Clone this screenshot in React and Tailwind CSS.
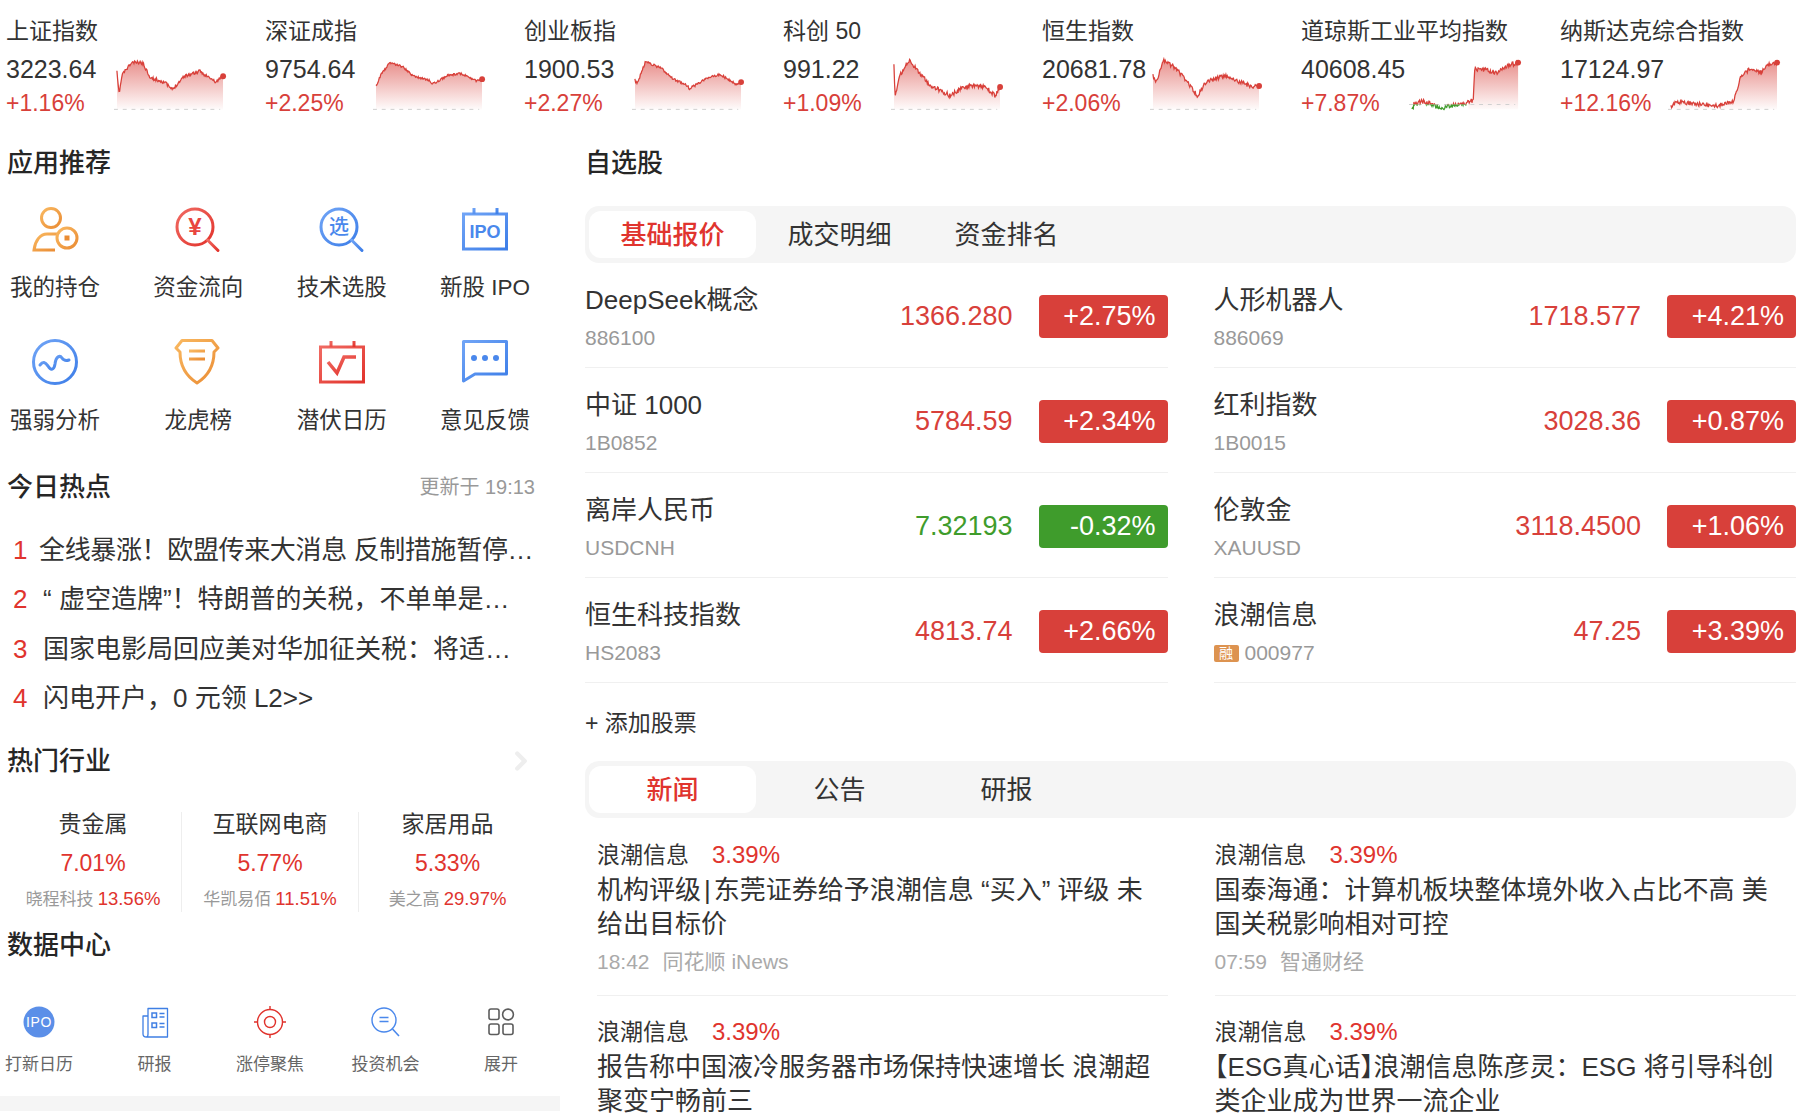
import React from 'react';
import { ChevronRight } from 'lucide-react';

const RED = '#d8403a';

// seeded noise so the sparklines come out the same on every render
const noise = (seed) => {
  let s = seed;
  return () => {
    s = (s * 16807) % 2147483647;
    return s / 2147483647 - 0.5;
  };
};

const buildLine = (keys, w, seed, amp) => {
  const rnd = noise(seed);
  const pts = [];
  for (let x = 0; x <= w; x += 0.7) {
    const pct = (x / w) * 100;
    let i = 0;
    while (i < keys.length - 2 && keys[i + 1][0] < pct) i++;
    const [x0, y0] = keys[i];
    const [x1, y1] = keys[i + 1];
    const y = y0 + ((y1 - y0) * (pct - x0)) / (x1 - x0);
    pts.push([x, y + rnd() * amp * 2]);
  }
  const [lx, ly] = keys[keys.length - 1];
  pts.push([(lx / 100) * w, ly]);
  return pts;
};

const Spark = ({ id, keys, seed, w = 109, base = 52, fillFrom = 0, cross, amp = 1.7 }) => {
  const pts = buildLine(keys, w, seed, amp);
  const d = pts.map((p, i) => `${i ? 'L' : 'M'}${p[0].toFixed(1)} ${p[1].toFixed(1)}`).join(' ');
  const last = pts[pts.length - 1];
  const area = `${d} L${last[0]} 52 L0 52 Z`;
  return (
    <svg width={w + 4} height="56" viewBox={`-3 0 ${w + 7} 56`} className="block overflow-visible">
      <defs>
        <linearGradient id={`fill-${id}`} x1="0" y1="0" x2="0" y2="1">
          <stop offset="0" stopColor={RED} stopOpacity="0.58" />
          <stop offset="1" stopColor={RED} stopOpacity="0.02" />
        </linearGradient>
        <clipPath id={`area-${id}`}>
          <rect x={fillFrom} y="0" width={w} height="56" />
        </clipPath>
        <clipPath id={`above-${id}`}>
          <rect x="-3" y="-4" width={w + 10} height={(cross ?? 60) + 4} />
        </clipPath>
        <clipPath id={`below-${id}`}>
          <rect x="-3" y={cross ?? 60} width={w + 10} height="30" />
        </clipPath>
      </defs>
      <path d={area} fill={`url(#fill-${id})`} clipPath={`url(#area-${id})`} />
      <line x1="-3" y1={cross ?? base} x2={w - 3} y2={cross ?? base} stroke="#cfcfcf" strokeWidth="1" strokeDasharray="4 5" />
      <path d={d} fill="none" stroke={RED} strokeWidth="1.3" clipPath={`url(#above-${id})`} />
      {cross != null && <path d={d} fill="none" stroke="#3f9c2c" strokeWidth="1.3" clipPath={`url(#below-${id})`} />}
      <circle cx={last[0]} cy={last[1]} r="3" fill={RED} />
    </svg>
  );
};

const indices = [
  { name: '上证指数', value: '3223.64', pct: '+1.16%', seed: 11, keys: [[0, 14], [2, 36], [5, 16], [14, 4], [24, 4], [32, 20], [45, 24], [52, 32], [63, 18], [78, 13], [93, 24], [100, 18]] },
  { name: '深证成指', value: '9754.64', pct: '+2.25%', seed: 37, amp: 1.2, keys: [[0, 28], [5, 16], [13, 4], [25, 8], [35, 18], [50, 22], [53, 26], [68, 17], [80, 15], [95, 23], [100, 21]] },
  { name: '创业板指', value: '1900.53', pct: '+2.27%', seed: 53, amp: 1.2, keys: [[0, 22], [2, 26], [10, 3], [25, 10], [35, 20], [50, 28], [51, 31], [68, 20], [80, 16], [95, 26], [100, 24]] },
  { name: '科创 50', value: '991.22', pct: '+1.09%', seed: 71, amp: 2.4, keys: [[0, 8], [1, 38], [6, 16], [14, 2], [24, 14], [35, 28], [50, 36], [52, 38], [68, 28], [85, 28], [95, 38], [100, 29]] },
  { name: '恒生指数', value: '20681.78', pct: '+2.06%', seed: 97, amp: 2.2, keys: [[0, 18], [3, 24], [10, 2], [22, 10], [35, 28], [42, 38], [50, 24], [68, 17], [82, 24], [95, 29], [100, 28]] },
  { name: '道琼斯工业平均指数', value: '40608.45', pct: '+7.87%', cross: 47, fillFrom: 58, seed: 131, amp: 2.3, keys: [[0, 54], [2, 46], [10, 44], [20, 47], [28, 51], [42, 47], [50, 46], [57, 43], [58, 41], [59, 10], [70, 12], [80, 14], [90, 7], [100, 4]] },
  { name: '纳斯达克综合指数', value: '17124.97', pct: '+12.16%', seed: 173, amp: 2.2, keys: [[0, 50], [5, 44], [22, 46], [40, 49], [55, 45], [59, 43], [63, 30], [65, 18], [75, 10], [85, 14], [92, 6], [100, 4]] },
];

const Heading = ({ children }) => (
  <div className="h-[34px] flex items-center text-[26px] font-medium text-[#262626]">{children}</div>
);

const Grad = ({ id, from, to }) => (
  <defs>
    <linearGradient id={id} x1="0" y1="0" x2="1" y2="1">
      <stop offset="0" stopColor={from} />
      <stop offset="1" stopColor={to} />
    </linearGradient>
  </defs>
);

const ORANGE = ['#f9b860', '#ea8c34'];
const BLUE = ['#70a4f6', '#3d7ee8'];
const CRIMSON = ['#f06a62', '#e2332c'];

const Icon48 = ({ id, c, children }) => (
  <svg width="48" height="48" viewBox="0 0 48 48" fill="none" stroke={`url(#${id})`} strokeWidth="3">
    <Grad id={id} from={c[0]} to={c[1]} />
    {children}
  </svg>
);

const apps = [
  {
    label: '我的持仓',
    icon: (
      <Icon48 id="a1" c={ORANGE}>
        <circle cx="20" cy="13" r="9.5" />
        <path d="M26 29 H16 C9 29 4 36 3 45 H24" />
        <circle cx="36" cy="33" r="10" />
        <rect x="33.5" y="30.5" width="5" height="5" fill="#ea8c34" stroke="none" />
      </Icon48>
    ),
  },
  {
    label: '资金流向',
    icon: (
      <Icon48 id="a2" c={CRIMSON}>
        <circle cx="21" cy="22" r="18" />
        <path d="M33.5 35 L44 45.5" strokeLinecap="round" />
        <text x="21" y="30" textAnchor="middle" fontSize="24" fontWeight="700" fill="#e8463f" stroke="none">¥</text>
      </Icon48>
    ),
  },
  {
    label: '技术选股',
    icon: (
      <Icon48 id="a3" c={BLUE}>
        <circle cx="21" cy="22" r="18" />
        <path d="M33.5 35 L44 45.5" strokeLinecap="round" />
        <text x="21" y="29" textAnchor="middle" fontSize="20" fontWeight="500" fill="#4a88ec" stroke="none">选</text>
      </Icon48>
    ),
  },
  {
    label: '新股 IPO',
    icon: (
      <Icon48 id="a4" c={BLUE}>
        <rect x="2.5" y="9" width="43" height="35" />
        <path d="M13 3 V9 M36 3 V9" />
        <text x="24" y="32.5" textAnchor="middle" fontSize="18" fontWeight="800" fill="#4a88ec" stroke="none">IPO</text>
      </Icon48>
    ),
  },
  {
    label: '强弱分析',
    icon: (
      <Icon48 id="a5" c={BLUE}>
        <circle cx="24" cy="24" r="21.5" />
        <path d="M9 27 C12 23 14 24 17 28 C20 33 23 32 24 26 C25 18 29 17 31 20 C33 23 35 23 38 22" strokeLinecap="round" />
      </Icon48>
    ),
  },
  {
    label: '龙虎榜',
    icon: (
      <Icon48 id="a6" c={ORANGE}>
        <path d="M8 2.5 H38 L44 10 L40 14 C40 28 34 38 23 45 C12 38 6 28 6 14 L2 10 Z" strokeLinejoin="round" />
        <path d="M15 13 H31 M15 21 H31" />
      </Icon48>
    ),
  },
  {
    label: '潜伏日历',
    icon: (
      <Icon48 id="a7" c={CRIMSON}>
        <rect x="2.5" y="9" width="43" height="35" />
        <path d="M13 3 V9 M36 3 V9" />
        <path d="M10 24 L19 35 L26 19 H38" strokeWidth="3.5" />
      </Icon48>
    ),
  },
  {
    label: '意见反馈',
    icon: (
      <Icon48 id="a8" c={BLUE}>
        <path d="M2.5 3.5 H45.5 V36 H14 L2.5 43 Z" strokeLinejoin="round" />
        <circle cx="13" cy="20" r="3" fill="#4a88ec" stroke="none" />
        <circle cx="24" cy="20" r="3" fill="#4a88ec" stroke="none" />
        <circle cx="35" cy="20" r="3" fill="#4a88ec" stroke="none" />
      </Icon48>
    ),
  },
];

const hot = [
  { text: '全线暴涨！欧盟传来大消息 反制措施暂停…', cls: 'tracking-[-0.35px]' },
  { text: '“ 虚空造牌”！特朗普的关税，不单单是…', cls: 'pl-[4px]' },
  { text: '国家电影局回应美对华加征关税：将适…', cls: 'pl-[4px]' },
  { text: '闪电开户，0 元领 L2>>', cls: 'pl-[4px]' },
];

const sectors = [
  { name: '贵金属', pct: '7.01%', stock: '晓程科技', sub: '13.56%' },
  { name: '互联网电商', pct: '5.77%', stock: '华凯易佰', sub: '11.51%' },
  { name: '家居用品', pct: '5.33%', stock: '美之高', sub: '29.97%' },
];

const dataCenter = [
  {
    label: '打新日历',
    icon: (
      <svg width="36" height="36" viewBox="0 0 36 36">
        <circle cx="18" cy="18" r="15.5" fill="#5b8fe8" />
        <text x="18" y="23" textAnchor="middle" fontSize="14" fill="#fff" letterSpacing="0.6">IPO</text>
      </svg>
    ),
  },
  {
    label: '研报',
    icon: (
      <svg width="36" height="36" viewBox="0 0 36 36" fill="none" stroke="#3f7fe4" strokeWidth="1.3">
        <path d="M11 4.5 H30.5 V33 H9.5 C7.5 33 6 32 6 30 V12 H11 Z M11 12 V30 C11 32 10 33 9.5 33" strokeLinejoin="round" />
        <rect x="15" y="9" width="4.5" height="4.5" strokeWidth="1.5" />
        <rect x="15" y="19" width="4.5" height="4.5" strokeWidth="1.5" />
        <path d="M22.5 9.5 H27.5 M22.5 13 H27.5 M22.5 19.5 H27.5 M22.5 23 H27.5" />
      </svg>
    ),
  },
  {
    label: '涨停聚焦',
    icon: (
      <svg width="36" height="36" viewBox="0 0 36 36" fill="none" stroke="#e0322c" strokeWidth="1.4">
        <circle cx="18" cy="18" r="12.5" />
        <circle cx="18" cy="18" r="5.5" />
        <path d="M18 2 V6 M18 30 V34 M2 18 H6 M30 18 H34" />
      </svg>
    ),
  },
  {
    label: '投资机会',
    icon: (
      <svg width="36" height="36" viewBox="0 0 36 36" fill="none" stroke="#4a88ec" strokeWidth="1.4">
        <circle cx="16" cy="16" r="12" />
        <path d="M11.5 13.5 H20.5 M11.5 17.5 H20.5" strokeWidth="1.6" />
        <path d="M24.5 25 L31 32" strokeWidth="1.6" />
      </svg>
    ),
  },
  {
    label: '展开',
    icon: (
      <svg width="36" height="36" viewBox="0 0 36 36" fill="none" stroke="#5c5c5c" strokeWidth="1.6">
        <rect x="6" y="5" width="10" height="10.5" rx="2" />
        <circle cx="25" cy="10.5" r="5.4" />
        <rect x="6" y="20" width="10" height="10.5" rx="2" />
        <rect x="20" y="20" width="10" height="10.5" rx="2" />
      </svg>
    ),
  },
];

const stocks = [
  { name: 'DeepSeek概念', code: '886100', price: '1366.280', pct: '+2.75%' },
  { name: '人形机器人', code: '886069', price: '1718.577', pct: '+4.21%' },
  { name: '中证 1000', code: '1B0852', price: '5784.59', pct: '+2.34%' },
  { name: '红利指数', code: '1B0015', price: '3028.36', pct: '+0.87%' },
  { name: '离岸人民币', code: 'USDCNH', price: '7.32193', pct: '-0.32%', down: true },
  { name: '伦敦金', code: 'XAUUSD', price: '3118.4500', pct: '+1.06%' },
  { name: '恒生科技指数', code: 'HS2083', price: '4813.74', pct: '+2.66%' },
  { name: '浪潮信息', code: '000977', price: '47.25', pct: '+3.39%', margin: true },
];

const Half = ({ children }) => <span className="[font-feature-settings:'halt']">{children}</span>;

const news = [
  { id: 1, lines: [<>机构评级<span className="mx-[3px]">|</span>东莞证券给予浪潮信息 “买入” 评级 未</>, '给出目标价'], time: '18:42', src: '同花顺 iNews', cls: 'pl-[12px]' },
  { id: 2, lines: ['国泰海通：计算机板块整体境外收入占比不高 美', '国关税影响相对可控'], time: '07:59', src: '智通财经', cls: 'pl-[1px]' },
  { id: 3, lines: ['报告称中国液冷服务器市场保持快速增长 浪潮超', '聚变宁畅前三'], cls: 'pl-[12px]' },
  { id: 4, lines: [<><Half>【</Half>ESG真心话<Half>】</Half>浪潮信息陈彦灵：ESG 将引导科创</>, '类企业成为世界一流企业'], cls: 'pl-[1px]' },
];

const TabBar = ({ tabs }) => (
  <div className="h-[57px] bg-[#f5f5f5] rounded-[14px] px-[4px] py-[5px] flex">
    {tabs.map((t, i) => (
      <div
        key={t}
        className={
          i === 0
            ? 'w-[167px] pt-[2px] rounded-[12px] bg-white flex items-center justify-center text-[26px] font-medium text-[#e0342e]'
            : 'w-[167px] pt-[2px] flex items-center justify-center text-[26px] text-[#333]'
        }
      >
        {t}
      </div>
    ))}
  </div>
);

export default function App() {
  return (
    <div className="w-[1808px] h-[1118px] overflow-hidden bg-white text-[#333] font-['Liberation_Sans','Noto_Sans_CJK_SC',sans-serif]">
      {/* index strip */}
      <div className="flex pl-[6px] pt-[16px] h-[146px]">
        {indices.map((x) => (
          <div key={x.name} className="w-[259px] shrink-0">
            <div className="h-[30px] flex items-center text-[23px] whitespace-nowrap text-[#333]">{x.name}</div>
            <div className="flex mt-[6px]">
              <div className="w-[111px] shrink-0">
                <div className="h-[34px] pt-[1px] flex items-center text-[25px] whitespace-nowrap text-[#333]">{x.value}</div>
                <div className="h-[34px] flex items-center text-[23px] whitespace-nowrap text-[#d8403a]">{x.pct}</div>
              </div>
              <div className="mt-[6px] -ml-[3px]">
                <Spark id={`s${x.seed}`} keys={x.keys} seed={x.seed} cross={x.cross} fillFrom={x.fillFrom} amp={x.amp} />
              </div>
            </div>
          </div>
        ))}
      </div>

      <div className="flex">
        {/* left column */}
        <div className="w-[560px] shrink-0">
          <div className="pl-[7px]">
            <Heading>应用推荐</Heading>
          </div>
          <div className="mt-[25px] ml-[10px] w-[520px] grid grid-cols-[90px_90px_90px_90px] justify-between gap-y-[35px]">
            {apps.map((a) => (
              <div key={a.label} className="flex flex-col items-center">
                <div className="w-[48px] h-[48px]">{a.icon}</div>
                <div className="mt-[20px] h-[30px] flex items-center text-[22.5px] whitespace-nowrap text-[#333]">{a.label}</div>
              </div>
            ))}
          </div>

          <div className="mt-[34px] pl-[7px] w-[535px] flex items-center justify-between">
            <Heading>今日热点</Heading>
            <span className="text-[20px] text-[#999]">更新于 19:13</span>
          </div>
          <div className="mt-[22px]">
            {hot.map((t, i) => (
              <div key={t.text} className="h-[49.33px] flex items-center text-[26px] whitespace-nowrap text-[#333]">
                <span className="ml-[13px] w-[26px] text-[#e0342e]">{i + 1}</span>
                <span className={t.cls}>{t.text}</span>
              </div>
            ))}
          </div>

          <div className="mt-[21px] pl-[7px] w-[536px] flex items-center justify-between">
            <Heading>热门行业</Heading>
            <ChevronRight size={30} strokeWidth={3.4} className="text-[#eeeeee]" />
          </div>
          <div className="mt-[34px] ml-[5px] w-[531px] grid grid-cols-3">
            {sectors.map((s, i) => (
              <div
                key={s.name}
                className={i < 2 ? 'h-[100px] flex flex-col items-center border-r border-[#eeeeee]' : 'h-[100px] flex flex-col items-center'}
              >
                <div className="h-[24px] flex items-center text-[23px] text-[#333]">{s.name}</div>
                <div className="mt-[12px] h-[30px] flex items-center text-[23px] text-[#e0342e]">{s.pct}</div>
                <div className="mt-[9px] h-[24px] flex items-center gap-[4px] text-[17px] whitespace-nowrap">
                  <span className="text-[#999]">{s.stock}</span>
                  <span className="text-[18.5px] text-[#e0342e]">{s.sub}</span>
                </div>
              </div>
            ))}
          </div>

          <div className="mt-[16px] pl-[7px]">
            <Heading>数据中心</Heading>
          </div>
          <div className="mt-[42px] ml-[1px] w-[538px] flex justify-between">
            {dataCenter.map((d) => (
              <div key={d.label} className="w-[76px] flex flex-col items-center">
                <div className="w-[36px] h-[36px]">{d.icon}</div>
                <div className="mt-[12px] h-[24px] flex items-center text-[17px] whitespace-nowrap text-[#666]">{d.label}</div>
              </div>
            ))}
          </div>
          <div className="mt-[20px] h-[15px] bg-[#f5f5f5]" />
        </div>

        {/* right column */}
        <div className="ml-[25px] w-[1211px] shrink-0">
          <Heading>自选股</Heading>
          <div className="mt-[26px]">
            <TabBar tabs={['基础报价', '成交明细', '资金排名']} />
          </div>
          <div className="grid grid-cols-2 gap-x-[46px]">
            {stocks.map((s) => (
              <div key={s.code} className="h-[105px] flex border-b border-[#f0f0f0]">
                <div className="pt-[20px]">
                  <div className="h-[34px] flex items-center text-[26px] whitespace-nowrap text-[#333]">{s.name}</div>
                  <div className="mt-[8px] h-[26px] flex items-center gap-[6px] text-[21px] text-[#999]">
                    {s.margin && (
                      <span className="w-[25px] h-[17px] rounded-[2px] bg-[#dd9350] text-white text-[14px] flex items-center justify-center">融</span>
                    )}
                    {s.code}
                  </div>
                </div>
                <div className="ml-auto mt-[32px] h-[43px] flex items-center gap-[26px]">
                  <span className={s.down ? 'text-[27px] text-[#3f9c2c]' : 'text-[27px] text-[#d8403a]'}>{s.price}</span>
                  <span
                    className={
                      s.down
                        ? 'w-[129px] h-[43px] rounded-[4px] bg-[#3f9c2c] text-white text-[27px] flex items-center justify-end pr-[12px]'
                        : 'w-[129px] h-[43px] rounded-[4px] bg-[#d8403a] text-white text-[27px] flex items-center justify-end pr-[12px]'
                    }
                  >
                    {s.pct}
                  </span>
                </div>
              </div>
            ))}
          </div>

          <div className="mt-[25px] h-[30px] flex items-center text-[23px] text-[#333]">+ 添加股票</div>
          <div className="mt-[23px]">
            <TabBar tabs={['新闻', '公告', '研报']} />
          </div>
          <div className="grid grid-cols-2 gap-x-[46px]">
            {news.map((n, i) => (
              <div key={n.id} className={n.cls}>
                <div className={i < 2 ? 'pt-[22px] pb-[20px] border-b border-[#f0f0f0]' : 'pt-[21px]'}>
                  <div className="h-[30px] flex items-center text-[23px] text-[#333]">
                    浪潮信息
                    <span className="ml-[23px] text-[24px] text-[#e0342e]">3.39%</span>
                  </div>
                  <div className="mt-[3px] text-[26px] leading-[34px] whitespace-nowrap text-[#333]">
                    {n.lines.map((l, k) => (
                      <div key={k}>{l}</div>
                    ))}
                  </div>
                  {n.time && (
                    <div className="mt-[8px] h-[26px] flex items-center gap-[13px] text-[21px] text-[#aaa]">
                      <span>{n.time}</span>
                      <span>{n.src}</span>
                    </div>
                  )}
                </div>
              </div>
            ))}
          </div>
        </div>
      </div>
    </div>
  );
}
